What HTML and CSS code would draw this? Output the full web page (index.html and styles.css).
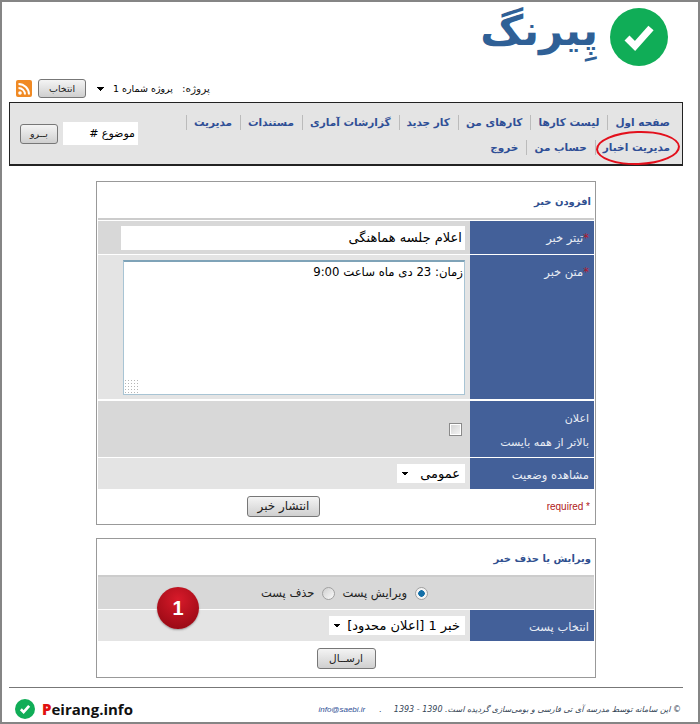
FILE: index.html
```html
<!DOCTYPE html>
<html lang="fa" dir="rtl">
<head>
    <meta charset="UTF-8">
    <meta name="viewport" content="width=device-width, initial-scale=1.0">
    <title>پیرنگ</title>
    <link rel="stylesheet" href="styles.css">
</head>
<body>
<div class="page">

    <header class="logo">
        <svg class="logo-mark" width="58" height="58" viewBox="0 0 58 58">
            <circle cx="29" cy="29" r="29" fill="#10ad57"/>
            <path d="M17 30l8 8 16-18" fill="none" stroke="#fff" stroke-width="7"/>
        </svg>
        <span class="logo-text">پِیرنگ</span>
    </header>

    <div class="project-row">
        <label class="project-label">پروژه:</label>
        <select class="project-select"><option>پروژه شماره 1</option></select>
        <button class="btn btn-small">انتخاب</button>
        <svg class="rss" width="16" height="17" viewBox="0 0 16 17">
            <rect width="16" height="17" rx="2" fill="#f08a24"/>
            <circle cx="4" cy="13" r="1.8" fill="#fff"/>
            <path d="M2.5 8a6.5 6.5 0 0 1 6.5 6.5M2.5 4a10.5 10.5 0 0 1 10.5 10.5" fill="none" stroke="#fff" stroke-width="2"/>
        </svg>
    </div>

    <nav class="menu">
        <ul class="menu-list">
            <li><a>صفحه اول</a></li>
            <li><a>لیست کارها</a></li>
            <li><a>کارهای من</a></li>
            <li><a>کار جدید</a></li>
            <li><a>گزارشات آماری</a></li>
            <li><a>مستندات</a></li>
            <li><a>مدیریت</a></li>
            <li><a>مدیریت اخبار</a></li>
            <li><a>حساب من</a></li>
            <li class="last"><a>خروج</a></li>
        </ul>
        <form class="menu-search">
            <input class="search-input" type="text" value="موضوع #">
            <button class="btn btn-go" type="button">بــرو</button>
        </form>
        <span class="circle-mark"></span>
    </nav>

    <section class="box box-add">
        <h2 class="box-title">افزودن خبر</h2>
        <div class="row row-title">
            <div class="row-label"><span class="star">*</span>تیتر خبر</div>
            <div class="row-field dark"><input class="text-input" type="text" value="اعلام جلسه هماهنگی"></div>
        </div>
        <div class="row row-body">
            <div class="row-label"><span class="star">*</span>متن خبر</div>
            <div class="row-field"><textarea class="text-area">زمان: 23 دی ماه ساعت 9:00</textarea></div>
        </div>
        <div class="row row-notice">
            <div class="row-label notice-label"><span>اعلان</span><span>بالاتر از همه بایست</span></div>
            <div class="row-field dark"><input class="check" type="checkbox"></div>
        </div>
        <div class="row row-view">
            <div class="row-label">مشاهده وضعیت</div>
            <div class="row-field"><select class="field-select view-select"><option>عمومی</option></select></div>
        </div>
        <div class="box-foot">
            <span class="required">required *</span>
            <button class="btn btn-publish" type="button">انتشار خبر</button>
        </div>
    </section>

    <section class="box box-edit">
        <h2 class="box-title">ویرایش یا حذف خبر</h2>
        <div class="radio-row">
            <label><input type="radio" name="mode" checked>ویرایش پست</label>
            <label><input type="radio" name="mode">حذف پست</label>
        </div>
        <div class="row row-pick">
            <div class="row-label">انتخاب پست</div>
            <div class="row-field"><select class="field-select pick-select"><option>خبر 1 [اعلان محدود]</option></select></div>
        </div>
        <div class="box-foot foot-center">
            <button class="btn btn-send" type="button">ارســال</button>
        </div>
        <span class="badge">1</span>
    </section>

    <footer class="foot">
        <p class="foot-text">© این سامانه توسط مدرسه آی تی فارسی و بومی‌سازی گردیده است. 1390 - 1393</p>
        <span class="foot-dot">.</span>
        <a class="foot-mail">info@saebi.ir</a>
        <div class="foot-logo">
            <span class="foot-name"><b>P</b>eirang.info</span>
            <svg width="20" height="20" viewBox="0 0 58 58">
                <circle cx="29" cy="29" r="29" fill="#10ad57"/>
                <path d="M17 30l8 8 16-18" fill="none" stroke="#fff" stroke-width="8"/>
            </svg>
        </div>
    </footer>

</div>
</body>
</html>
```

FILE: styles.css
```css
body {
    margin: 0;
    font-family: "DejaVu Sans", "Liberation Sans", sans-serif;
    font-size: 11px;
    color: #222;
    background-color: #fff;
}
.page {
    box-sizing: border-box;
    height: 724px;
    border: 2px solid #858585;
    overflow: hidden;
}

/* top logo */
.logo {
    display: flex;
    align-items: center;
    gap: 12px;
    height: 60px;
    padding: 5px 30px 0 0;
}
.logo-text {
    margin-top: -12px;
    font-size: 42px;
    font-weight: bold;
    line-height: 60px;
    color: #2f6096;
}

/* project picker */
.project-row {
    display: flex;
    align-items: center;
    justify-content: flex-end;
    gap: 6px;
    height: 20px;
    margin-top: 11px;
    padding-left: 14px;
}
.project-label { font-size: 10.5px; }
.project-select {
    appearance: none;
    width: 84px;
    height: 18px;
    padding: 0 3px 0 0;
    border: none;
    font-family: inherit;
    font-size: 9.5px;
    background-color: #fff;
    background-image: linear-gradient(45deg, transparent 50%, #000 50%), linear-gradient(135deg, #000 50%, transparent 50%);
    background-size: 4px 4px;
    background-position: 5px 8px, 9px 8px;
    background-repeat: no-repeat;
}
.btn {
    border: 1px solid #777;
    border-radius: 3px;
    background: linear-gradient(#f4f4f4, #cfcfcf);
    color: #222;
    font-family: inherit;
    padding: 0;
}
.btn-small { width: 48px; height: 19px; font-size: 9.5px; }

/* menu */
.menu {
    position: relative;
    display: flex;
    box-sizing: border-box;
    width: 674px;
    height: 64px;
    margin: 4px 15px 0 0;
    border: 1px solid #222;
    border-bottom-width: 2px;
    background-color: #e4e4e4;
}
.menu-list {
    display: flex;
    flex-wrap: wrap;
    align-content: flex-start;
    flex: none;
    width: 504px;
    margin: 0;
    padding: 7px 4px 0 0;
    list-style: none;
}
.menu-list li {
    height: 25px;
    line-height: 25px;
    padding: 0 8px;
    position: relative;
    white-space: nowrap;
}
.menu-list li::after {
    content: "";
    position: absolute;
    left: 0;
    top: 5px;
    height: 15px;
    border-left: 1px solid #bbb;
}
.menu-list li.last::after { display: none; }
.menu-list a {
    font-size: 10.5px;
    font-weight: bold;
    color: #2f4f96;
}
.menu-search {
    display: flex;
    align-items: center;
    gap: 5px;
    padding-right: 36px;
}
.search-input {
    box-sizing: border-box;
    width: 75px;
    height: 23px;
    padding: 0 3px;
    border: none;
    font-family: inherit;
    font-size: 11px;
}
.btn-go { width: 38px; height: 20px; font-size: 9.5px; }
.circle-mark {
    position: absolute;
    left: 586px;
    top: 28px;
    width: 80px;
    height: 30px;
    border: 2px solid #e3101c;
    border-radius: 50%;
    transform: rotate(-2deg);
}

/* form boxes */
.box {
    position: relative;
    box-sizing: border-box;
    width: 500px;
    margin-right: 102px;
    padding: 0 1px;
    border: 1px solid #999;
}
.box-add { height: 344px; margin-top: 15px; }
.box-edit { height: 140px; margin-top: 13px; }
.box-title {
    height: 36px;
    margin: 0;
    padding-right: 3px;
    border-bottom: 2px solid #ccc;
    font-size: 10px;
    line-height: 39px;
    color: #2f4f8f;
}
.row {
    display: grid;
    grid-template-columns: 124px 1fr;
    margin-top: 1px;
}
.row-label {
    box-sizing: border-box;
    padding: 10px 5px 0 0;
    background-color: #436099;
    color: #e8ecf4;
    font-size: 11.5px;
}
.star { color: #b0182a; }
.row-field {
    display: flex;
    align-items: center;
    padding-right: 5px;
    background-color: #e4e4e4;
}
.row-field.dark { background-color: #d8d8d8; }
.row-title { height: 33px; margin-top: 1px; }
.row-body { height: 144px; }
.row-notice { height: 56px; margin-top: 2px; }
.row-view { height: 31px; margin-top: 1px; }
.row-pick { height: 31px; margin-top: 1px; }
.text-input {
    box-sizing: border-box;
    width: 344px;
    height: 24px;
    padding: 0 3px;
    border: none;
    font-family: inherit;
    font-size: 13px;
}
.text-area {
    box-sizing: border-box;
    width: 342px;
    height: 135px;
    padding: 3px 1px;
    border: 1px solid #a8c4d4;
    border-top: 2px solid #7fa3b8;
    font-family: inherit;
    font-size: 11.7px;
    background-color: #fff;
}
.text-area::-webkit-resizer {
    background: radial-gradient(#b5b5b5 1px, transparent 1px) 0 0 / 3px 3px;
}
.notice-label {
    display: flex;
    flex-direction: column;
    gap: 11px;
    padding-top: 11px;
    font-size: 11px;
}
.check {
    appearance: none;
    box-sizing: border-box;
    width: 13px;
    height: 13px;
    margin: 0 3px 0 0;
    border: 1px solid #8a8a8a;
    box-shadow: inset 0 0 0 1px #fff;
    background: linear-gradient(135deg, #d2d2d2, #f6f6f6);
}
.field-select {
    appearance: none;
    height: 19px;
    padding: 0 5px 0 0;
    border: none;
    font-family: inherit;
    font-size: 13px;
    background-color: #fff;
    background-image: linear-gradient(45deg, transparent 50%, #000 50%), linear-gradient(135deg, #000 50%, transparent 50%);
    background-size: 4px 4px;
    background-position: 4px 8px, 8px 8px;
    background-repeat: no-repeat;
}
.view-select { width: 68px; }
.pick-select { width: 136px; }
.box-foot {
    display: flex;
    align-items: center;
    height: 34px;
}
.required {
    box-sizing: border-box;
    width: 124px;
    padding-right: 4px;
    color: #b01818;
    font-family: "Liberation Sans", sans-serif;
    font-size: 10px;
    direction: ltr;
    text-align: right;
}
.btn-publish { width: 73px; height: 21px; margin-right: 150px; font-size: 12px; }
.foot-center { justify-content: center; }
.btn-send { width: 59px; height: 21px; font-size: 10.5px; }
.radio-row {
    display: flex;
    justify-content: center;
    align-items: center;
    gap: 7px;
    height: 32px;
    padding-right: 3px;
    background-color: #d8d8d8;
    font-size: 11.5px;
}
.radio-row label { display: flex; align-items: center; gap: 8px; }
.radio-row input {
    appearance: none;
    box-sizing: border-box;
    width: 13px;
    height: 13px;
    margin: 0;
    border: 1px solid #a0a0a0;
    border-radius: 50%;
    background: linear-gradient(135deg, #cfcfcf, #fafafa);
}
.radio-row input:checked {
    background: radial-gradient(circle, #136fa8 3px, #f4f4f4 3.5px);
}
.badge {
    position: absolute;
    left: 60px;
    top: 48px;
    width: 42px;
    height: 42px;
    border-radius: 50%;
    background: radial-gradient(circle at 50% 30%, #d81a2a, #8c0610);
    box-shadow: 0 1px 2px #999;
    color: #fff;
    font-family: "Liberation Sans", sans-serif;
    font-size: 20px;
    font-weight: bold;
    line-height: 42px;
    text-align: center;
}

/* footer */
.foot {
    display: flex;
    align-items: center;
    box-sizing: border-box;
    width: 674px;
    height: 33px;
    margin: 9px 15px 0 0;
    padding: 10px 2px 0 0;
    border-top: 1px solid #777;
    font-size: 8px;
    font-style: italic;
    color: #345;
}
.foot-text { margin: 0 0 0 12px; }
.foot-dot { margin-left: 14px; }
.foot-mail {
    color: #2f4f96;
    font-family: "Liberation Sans", sans-serif;
    direction: ltr;
}
.foot-logo {
    display: flex;
    align-items: center;
    flex-direction: row-reverse;
    gap: 7px;
    margin-right: auto;
    padding-left: 6px;
    direction: ltr;
    font-style: normal;
}
.foot-name {
    font-family: "Open Sans", sans-serif;
    font-size: 15px;
    font-weight: bold;
    color: #111;
}
.foot-name b { color: #e01010; }
```
